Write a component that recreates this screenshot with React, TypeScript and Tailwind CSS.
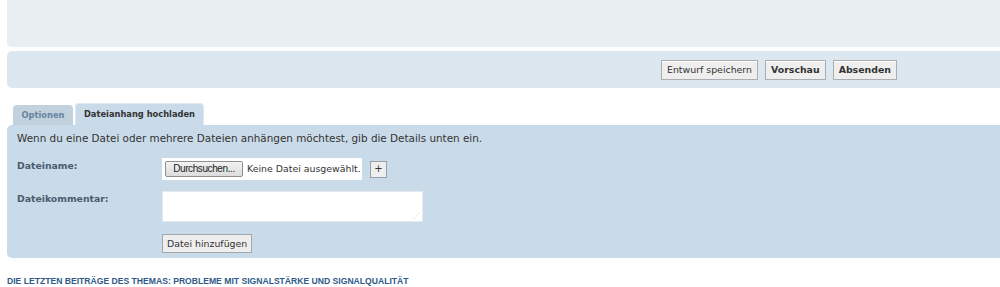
import React from 'react';

const btn =
  "h-[20px] px-[5px] border border-[#a9aeb3] bg-[#eeeeee] text-[9.4px] text-[#333] leading-none whitespace-nowrap shadow-[inset_0_1px_0_#fff]";

const App: React.FC = () => {
  return (
    <div className="w-[1000px] h-[287px] bg-white overflow-hidden" style={{ fontFamily: '"DejaVu Sans", Verdana, sans-serif' }}>
      {/* top panel */}
      <div className="ml-[7px] h-[47px] bg-[#e8eef2] rounded-bl-[5px]" />

      {/* action bar */}
      <div className="ml-[7px] mt-[4px] h-[37px] bg-[#dde7ef] rounded-l-[5px] flex items-center pl-[654px] gap-[7px]">
        <button className={btn}>Entwurf speichern</button>
        <button className={`${btn} font-bold`}>Vorschau</button>
        <button className={`${btn} font-bold`}>Absenden</button>
      </div>

      {/* tabs */}
      <div className="mt-[15px] ml-[13px] flex items-end gap-[2px] h-[22px]">
        <div className="h-[20px] w-[60px] bg-[#c1d1de] rounded-t-[4px] flex items-center justify-center text-[8.3px] font-bold text-[#6783a0]">
          Optionen
        </div>
        <div className="h-[22px] w-[129px] bg-[#c9dae8] border border-b-0 border-[#dfe8ef] rounded-t-[4px] flex items-center justify-center text-[8.3px] font-bold text-[#333]">
          Dateianhang hochladen
        </div>
      </div>

      {/* attachment panel */}
      <div className="ml-[7px] h-[133px] bg-[#c9dae8] rounded-l-[5px] pl-[10px] pt-[6px]">
        <p className="text-[10.4px] text-[#333] leading-[14px] whitespace-nowrap">
          Wenn du eine Datei oder mehrere Dateien anhängen möchtest, gib die Details unten ein.
        </p>

        <div className="flex mt-[13px]">
          <div className="w-[145px] text-[9.3px] font-bold text-[#4a5c6e] pt-[1px]">Dateiname:</div>
          <div className="flex items-center gap-[8px]">
            <div className="h-[22px] w-[200px] bg-white flex items-center pl-[3px] gap-[4px] whitespace-nowrap">
              <span className="h-[16px] w-[78px] text-center border border-[#8e8f8f] rounded-[2px] bg-gradient-to-b from-[#f2f2f2] to-[#dcdcdc] text-[10px] leading-[14px] text-[#222]" style={{ fontFamily: '"Liberation Sans", Arial, sans-serif', letterSpacing: '-0.4px' }}>
                Durchsuchen...
              </span>
              <span className="text-[9.4px] text-[#333]">Keine Datei ausgewählt.</span>
            </div>
            <button className="h-[17px] w-[17px] border border-[#9aa0a6] bg-[#eeeeee] text-[10px] leading-none text-[#333]">+</button>
          </div>
        </div>

        <div className="flex mt-[11px]">
          <div className="w-[145px] text-[9.3px] font-bold text-[#4a5c6e] pt-[1px]">Dateikommentar:</div>
          <div className="relative h-[31px] w-[261px] bg-white border border-[#e3e9ee]">
            <span className="absolute right-[2px] bottom-[1px] text-[7px] leading-none text-[#bbb]">⋰</span>
          </div>
        </div>

        <div className="pl-[145px] mt-[8px]">
          <button className="h-[19px] px-[4px] border border-[#a2a7ac] bg-[#eeeeee] text-[9.4px] leading-none text-[#333] whitespace-nowrap">Datei hinzufügen</button>
        </div>
      </div>

      {/* heading */}
      <h3
        className="ml-[7px] mt-[19px] text-[8.6px] font-bold uppercase text-[#2d5a88] leading-none whitespace-nowrap"
        style={{ fontFamily: '"Liberation Sans", Arial, sans-serif' }}
      >
        Die letzten Beiträge des Themas: Probleme mit Signalstärke und Signalqualität
      </h3>
    </div>
  );
};

export default App;
